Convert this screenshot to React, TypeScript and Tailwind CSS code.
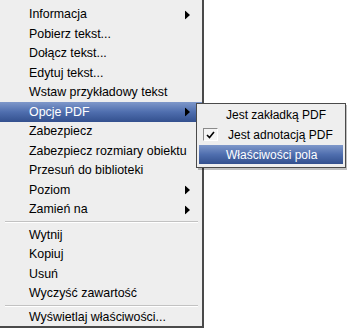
import React from 'react';

type Item = { label: string; sub?: boolean; active?: boolean } | 'sep';

const items: Item[] = [
  { label: 'Informacja', sub: true },
  { label: 'Pobierz tekst...' },
  { label: 'Dołącz tekst...' },
  { label: 'Edytuj tekst...' },
  { label: 'Wstaw przykładowy tekst' },
  { label: 'Opcje PDF', sub: true, active: true },
  { label: 'Zabezpiecz' },
  { label: 'Zabezpiecz rozmiary obiektu' },
  { label: 'Przesuń do biblioteki' },
  { label: 'Poziom', sub: true },
  { label: 'Zamień na', sub: true },
  'sep',
  { label: 'Wytnij' },
  { label: 'Kopiuj' },
  { label: 'Usuń' },
  { label: 'Wyczyść zawartość' },
  'sep',
  { label: 'Wyświetlaj właściwości...' },
];

const Arrow = () => (
  <svg width="5" height="9" viewBox="0 0 5 9" className="absolute right-[12px] top-1/2 -translate-y-1/2">
    <polygon points="0,0 5,4.5 0,9" fill="#000" />
  </svg>
);

const Check = () => (
  <div className="absolute left-[4px] top-[3px] w-[15px] h-[13px] border border-t-[#8a8a8a] border-l-[#8a8a8a] border-r-[#ffffff] border-b-[#ffffff] bg-[#f4f4f4] flex items-center justify-center">
    <svg width="9" height="8" viewBox="0 0 9 8">
      <path d="M1 4 L3.5 6.5 L8 1" stroke="#000" strokeWidth="1.6" fill="none" />
    </svg>
  </div>
);

export default function App() {
  return (
    <div
      className="relative w-[347px] h-[328px] bg-white overflow-hidden text-[12.4px] text-black"
      style={{ fontFamily: '"Liberation Sans", Arial, sans-serif' }}
    >
      <div className="w-[204px] h-[328px] bg-[#eeeeee] border-r-2 border-b-2 border-[#4a4a4a] pt-[5px] flex flex-col">
        {items.map((it, i) =>
          it === 'sep' ? (
            <div key={i} className="h-[6.6px] flex flex-col justify-center pl-[5px] pr-[4px]">
              <div className="h-px bg-[#c2c2c2]" />
              <div className="h-px bg-white" />
            </div>
          ) : (
            <div
              key={i}
              className={
                'relative shrink-0 flex items-center pl-[29px] ' +
                (i === 0 ? 'h-[19.4px] ' : i === items.length - 1 ? 'h-[17px] ' : 'h-[19.5px] ') +
                (it.active
                  ? 'bg-gradient-to-b from-[#7f98ca] via-[#4f6eae] to-[#33508e] text-white'
                  : '')
              }
            >
              <span className="leading-none">{it.label}</span>
              {it.sub && <Arrow />}
            </div>
          )
        )}
      </div>

      <div className="absolute left-[196px] top-[103px] w-[150px] bg-[#eeeeee] border border-[#4a4a4a] pt-px pb-[3px] pl-[2px] pr-[2px] shadow-[2px_2px_0_rgba(0,0,0,0.25)] text-[12px]">
        <div className="relative h-[20px] flex items-center pl-[27px]">
          <span className="leading-none">Jest zakładką PDF</span>
        </div>
        <div className="relative h-[20px] flex items-center pl-[29px]">
          <Check />
          <span className="leading-none">Jest adnotacją PDF</span>
        </div>
        <div className="relative h-[19px] flex items-center pl-[27px] bg-gradient-to-b from-[#7f98ca] via-[#4f6eae] to-[#33508e] text-white">
          <span className="leading-none">Właściwości pola</span>
        </div>
      </div>
    </div>
  );
}
